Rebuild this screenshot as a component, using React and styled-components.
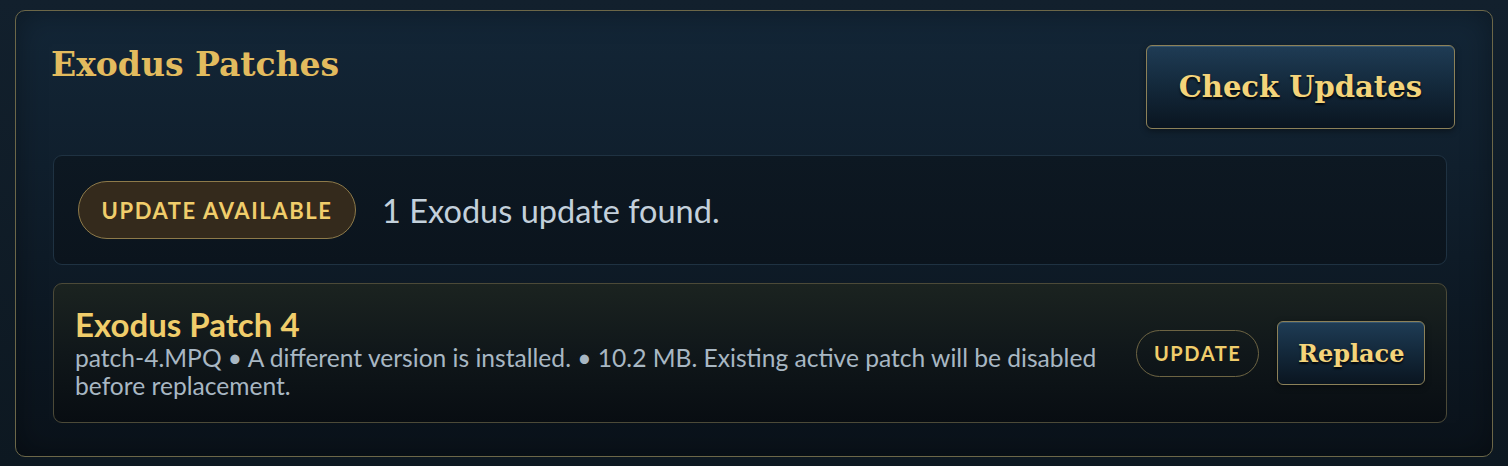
import React from "react";
import styled, { createGlobalStyle } from "styled-components";

const GlobalStyle = createGlobalStyle`
    html, body {
        margin: 0;
        padding: 0;
        background: #0e1a25;
    }
    body {
        font-family: Lato, "Noto Sans", sans-serif;
    }
`;

const serif = `"DejaVu Serif", Georgia, serif`;
const sans = `Lato, "Noto Sans", sans-serif`;

const Page = styled.div`
    width: 1508px;
    height: 466px;
    box-sizing: border-box;
    padding: 10px 15px 9px 15px;
    background: linear-gradient(180deg, #12202d 0%, #0d1821 100%);
`;

const Panel = styled.section`
    height: 100%;
    box-sizing: border-box;
    padding: 34px 37px 33px 37px;
    border: 1.5px solid #6c6748;
    border-radius: 10px;
    background: linear-gradient(180deg, #132637 0%, #0f1d2a 45%, #0a121a 100%);
    box-shadow: inset 0 0 30px rgba(0, 0, 0, 0.35);
`;

const Header = styled.header`
    display: flex;
    justify-content: space-between;
    align-items: flex-start;
    margin-bottom: 26px;
`;

const Title = styled.h2`
    margin: 0 0 0 -2px;
    font-family: ${serif};
    font-weight: 700;
    font-size: 33px;
    line-height: 40px;
    color: #e2bb5e;
`;

const GoldButton = styled.button`
    box-sizing: border-box;
    height: ${(p) => (p.$small ? 64 : 84)}px;
    padding: 0 ${(p) => (p.$small ? 19.5 : 32)}px;
    border: 1.5px solid #8c8159;
    border-radius: 6px;
    background: linear-gradient(180deg, #1f3c55 0%, #142a3d 45%, #0a1520 100%);
    box-shadow: inset 0 1px 0 rgba(120, 160, 190, 0.25), 0 2px 6px rgba(0, 0, 0, 0.4);
    font-family: ${serif};
    font-weight: 700;
    font-size: ${(p) => (p.$small ? 24 : 29)}px;
    color: #f4d47a;
    text-shadow: 0 2px 2px rgba(0, 0, 0, 0.85);
    cursor: pointer;
`;

const List = styled.div`
    display: flex;
    flex-direction: column;
    gap: 18px;
    margin-right: 8px;
`;

const StatusBox = styled.div`
    display: flex;
    align-items: center;
    gap: 26px;
    height: 110px;
    box-sizing: border-box;
    padding: 0 24px;
    border: 1.5px solid #1f3242;
    border-radius: 9px;
    background: linear-gradient(180deg, #0d1822 0%, #0b141d 100%);
`;

const Pill = styled.span`
    display: inline-flex;
    align-items: center;
    justify-content: center;
    box-sizing: border-box;
    height: ${(p) => (p.$small ? 47 : 58)}px;
    padding: 0 ${(p) => (p.$small ? 17 : 22.5)}px;
    border: 1.5px solid ${(p) => (p.$small ? "#6d6443" : "#8d7a4a")};
    border-radius: 30px;
    background: ${(p) => (p.$small ? "transparent" : "#342a1c")};
    font-family: ${sans};
    font-weight: 700;
    font-size: ${(p) => (p.$small ? 20 : 22)}px;
    letter-spacing: 1.6px;
    text-transform: uppercase;
    color: #f0cd6b;
`;

const StatusText = styled.span`
    font-family: ${sans};
    font-size: 32.5px;
    color: #c3d0db;
`;

const PatchCard = styled.article`
    display: flex;
    align-items: center;
    justify-content: space-between;
    gap: 30px;
    height: 140px;
    box-sizing: border-box;
    padding: 0 21px;
    border: 1.5px solid #4c4a38;
    border-radius: 9px;
    background: linear-gradient(180deg, #1b2320 0%, #10171a 50%, #080d12 100%);
`;

const PatchInfo = styled.div`
    max-width: 1040px;
`;

const PatchName = styled.h3`
    margin: 0 0 2px;
    font-family: ${sans};
    font-weight: 700;
    font-size: 33px;
    line-height: 36px;
    color: #f0cd6b;
`;

const PatchMeta = styled.p`
    margin: 0;
    font-family: ${sans};
    font-size: 24.6px;
    line-height: 28px;
    color: #a8b7c3;
`;

const Actions = styled.div`
    display: flex;
    align-items: center;
    gap: 18px;
    flex-shrink: 0;
`;

const patches = [
    {
        id: "patch-4",
        name: "Exodus Patch 4",
        file: "patch-4.MPQ",
        status: "A different version is installed.",
        size: "10.2 MB",
        note: "Existing active patch will be disabled before replacement.",
    },
];

const App = () => {
    return (
        <>
            <GlobalStyle />
            <Page>
                <Panel>
                    <Header>
                        <Title>Exodus Patches</Title>
                        <GoldButton>Check Updates</GoldButton>
                    </Header>
                    <List>
                        <StatusBox>
                            <Pill>Update available</Pill>
                            <StatusText>
                                {patches.length} Exodus update found.
                            </StatusText>
                        </StatusBox>
                        {patches.map((patch) => (
                            <PatchCard key={patch.id}>
                                <PatchInfo>
                                    <PatchName>{patch.name}</PatchName>
                                    <PatchMeta>
                                        {patch.file} • {patch.status} •{" "}
                                        {patch.size}. {patch.note}
                                    </PatchMeta>
                                </PatchInfo>
                                <Actions>
                                    <Pill $small>Update</Pill>
                                    <GoldButton $small>Replace</GoldButton>
                                </Actions>
                            </PatchCard>
                        ))}
                    </List>
                </Panel>
            </Page>
        </>
    );
};

export default App;
